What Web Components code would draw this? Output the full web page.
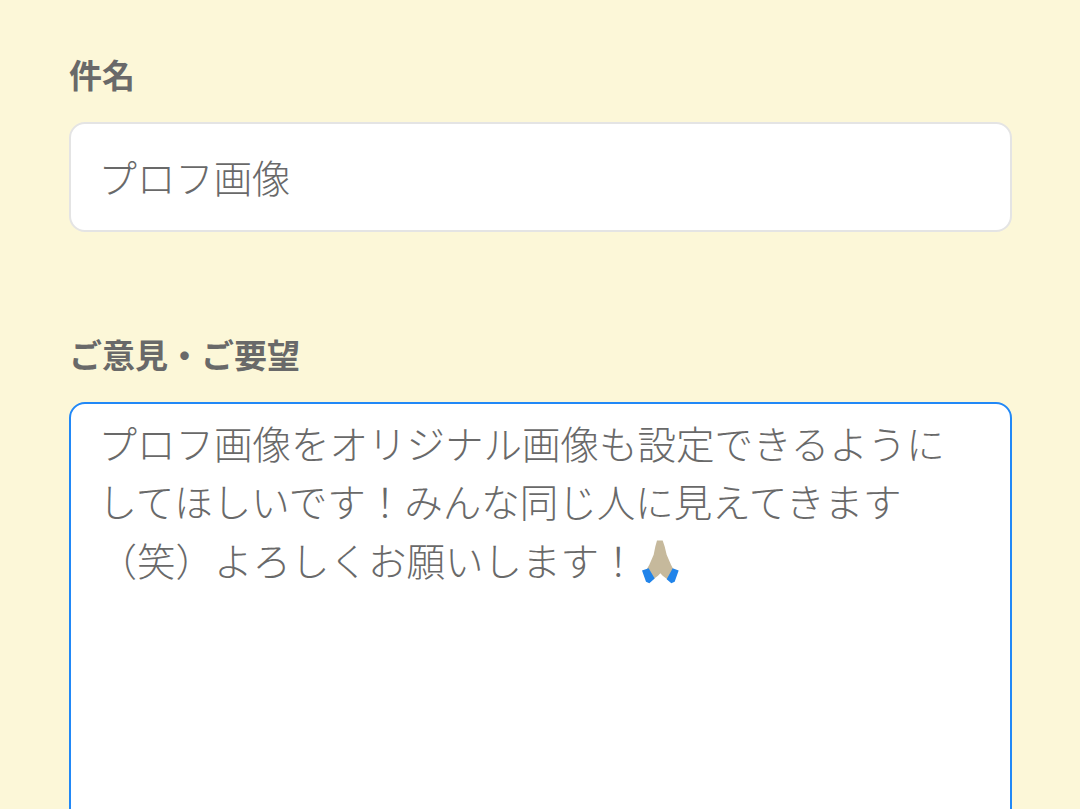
<!DOCTYPE html>
<html lang="ja"><head><meta charset="utf-8"><style>
html,body{margin:0;height:100%;overflow:hidden;background:#fcf7d8}
body{font-family:"Noto Sans CJK JP","Noto Sans",sans-serif;color:#6b6b6b}
</style></head><body>
<feedback-form>
<form-field label="件名"><text-box>プロフ画像</text-box></form-field>
<form-field label="ご意見・ご要望"><text-area>プロフ画像をオリジナル画像も設定できるように<br>してほしいです！みんな同じ人に見えてきます<br>（笑）よろしくお願いします！<pray-emoji></pray-emoji></text-area></form-field>
</feedback-form>
<script>
function def(name,css,html){customElements.define(name,class extends HTMLElement{
 constructor(){super();const r=this.attachShadow({mode:'open'});
 r.innerHTML='<style>'+css+'</style>'+html;}
 connectedCallback(){const l=this.shadowRoot.querySelector('[data-label]');if(l)l.textContent=this.getAttribute('label');}
});}
def('feedback-form',':host{display:flex;flex-direction:column;gap:95px;padding:47px 68px 0 69px}','<slot></slot>');
def('form-field',':host{display:flex;flex-direction:column;gap:21px} label{font-size:33px;font-weight:700;line-height:54px;color:#696969;display:block}','<label data-label></label><slot></slot>');
def('text-box',':host{display:block;box-sizing:border-box;height:110px;background:#fff;border:2px solid #e4e4e4;border-radius:16px;padding:0 27.5px;font-size:38.4px;font-weight:300;line-height:104px;color:#696969}','<slot></slot>');
def('text-area',':host{display:block;box-sizing:border-box;height:600px;background:#fff;border:2px solid #2188f7;border-radius:16px;padding:9px 27.5px;font-size:38.5px;font-weight:300;line-height:58.4px;color:#696969;white-space:nowrap}','<slot></slot>');
def('pray-emoji',':host{display:inline-block;width:39px;height:45px;vertical-align:-8px;margin-left:3px}svg{display:block}','<svg width="39" height="45" viewBox="95 28 117 134"><path d="M143 32L160 32L166 50L172 75L185 105L194 122L176 150L160 138L153 130L146 138L130 150L110 122L120 105L133 75L138 50Z" fill="#c6b99c"/><path d="M98 122L118 115L136 146L120 160L110 156ZM208 122L190 115L172 148L186 160L196 156Z" fill="#2184ea"/></svg>');
</script>
</body></html>
